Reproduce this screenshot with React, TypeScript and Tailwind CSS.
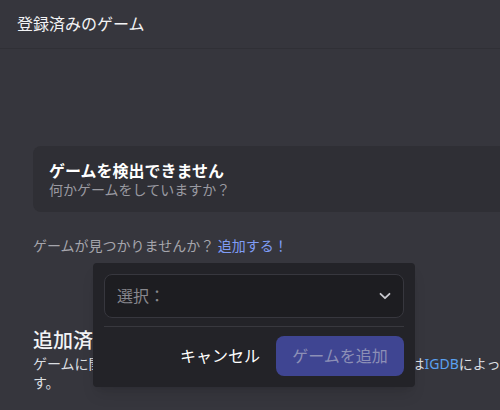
import React from "react";

const font = { fontFamily: '"Noto Sans", "Noto Sans CJK JP", sans-serif' };

function Chevron() {
  return (
    <svg width="12" height="8" viewBox="0 0 12 8" fill="none" className="text-[#c9c9cf]">
      <path d="M1.5 1.8 6 6.2l4.5-4.4" stroke="currentColor" strokeWidth="1.8" strokeLinecap="round" strokeLinejoin="round" />
    </svg>
  );
}

function AddGamePopout() {
  return (
    <div className="absolute left-[93px] top-[263px] w-[322px] rounded-[4px] bg-[#232328] p-[11px] shadow-lg">
      <button className="flex h-[44px] w-full items-center justify-between rounded-[8px] border border-[#37373e] bg-[#1d1d21] pl-[12px] pr-[12px]">
        <span className="text-[16px] text-[#87878d]">選択：</span>
        <Chevron />
      </button>
      <div className="mt-[8px] h-px bg-[#38383e]" />
      <div className="mt-[9px] flex items-center justify-end gap-[16px]">
        <button className="text-[16px] font-normal text-white">キャンセル</button>
        <button className="h-[40px] w-[128px] rounded-[8px] bg-[#3f4592] text-[16px] text-[#8c8fb6]">ゲームを追加</button>
      </div>
    </div>
  );
}

export default function App() {
  return (
    <div className="relative h-[410px] w-[500px] overflow-hidden bg-[#36363d] text-[#dbdee1]" style={font}>
      <div className="flex h-[49px] items-center border-b border-[#303036] px-[17px]">
        <h1 className="text-[16px] text-[#f2f3f5]">登録済みのゲーム</h1>
      </div>

      <div className="w-[580px] pl-[33px] pt-[97px]">
        <div className="rounded-[8px] bg-[#2f2f35] px-4 pb-[13px] pt-[15px]">
          <p className="text-[16px] font-bold leading-5 text-white">ゲームを検出できません</p>
          <p className="text-[14px] leading-[18px] text-[#9a9aa1]">何かゲームをしていますか？</p>
        </div>

        <p className="mt-[25px] text-[14px] leading-[18px] text-[#a5a5ac]">
          ゲームが見つかりませんか？ <span className="text-[#7f9cf5]">追加する！</span>
        </p>

        <h2 className="mt-[74px] text-[20px] font-medium leading-6 text-[#f2f3f5]">追加済みのゲーム</h2>
        <p className="mt-[1px] whitespace-nowrap text-[14px] leading-[19px] text-[#dbdee1]">
          ゲームに関するメタデータ（カバー画像、説明など）の一部は<span className="text-[#5aa0f0]">IGDB</span>によって提供されていま
          <br />
          す。
        </p>
      </div>

      <AddGamePopout />
    </div>
  );
}
